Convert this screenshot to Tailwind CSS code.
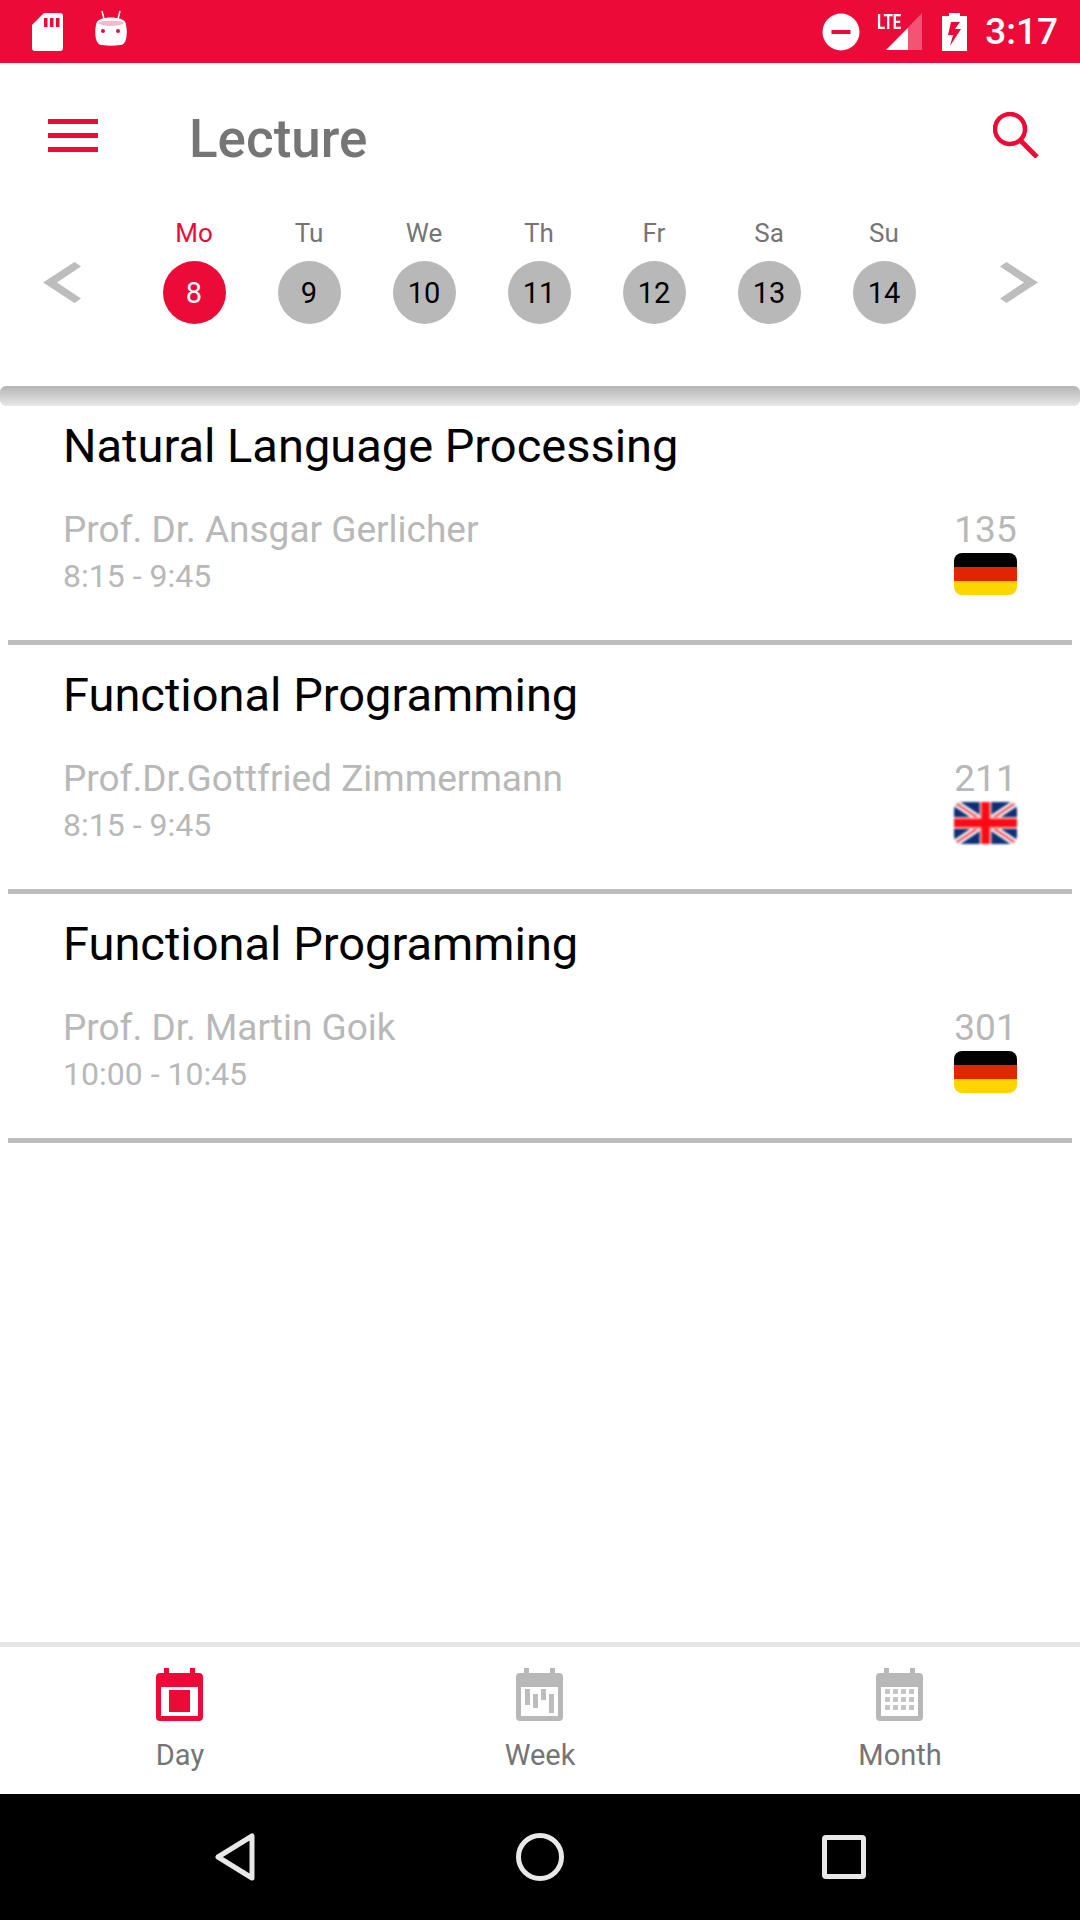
<!DOCTYPE html>
<html lang="en">
<head>
    <meta charset="UTF-8">
    <meta name="viewport" content="width=device-width, initial-scale=1.0">
    <title>Lecture</title>
    <script src="https://cdn.jsdelivr.net/npm/@tailwindcss/browser@4"></script>
</head>
<body class="bg-white font-['Roboto',sans-serif]">
<div class="w-[1080px] h-[1920px] flex flex-col overflow-hidden">

    <!-- status bar -->
    <div class="h-[63px] shrink-0 bg-[#ec0b38] flex items-center text-white">
        <svg class="ml-[32px]" width="31" height="38" viewBox="0 0 31 38"><path fill="#fff" d="M12 0H28a3 3 0 0 1 3 3V35a3 3 0 0 1-3 3H3a3 3 0 0 1-3-3V12Z"/><path fill="#ec0b38" d="M12 5h3.500v9H12zM18 5h3.500v9H18zM24 5h3.500v9H24z"/></svg>
        <svg class="ml-[32px] mt-[-6px]" width="32" height="37" viewBox="0 0 32 37"><path stroke="#fff" stroke-width="1.500" d="M7 1l2 8M25 1l-2 8"/><path fill="#fff" d="M6 9c6-2 14-2 20 0 3 1 5 3 5 6 1 4 1 10 0 14-1 4-3 6-6 6-6 1-12 1-18 0-3 0-5-2-6-6-1-4-1-10 0-14 0-3 2-5 5-6Z"/><path fill="#f9b8c6" d="M3 13c2-3 24-3 26 0-5 4-21 4-26 0Z"/><circle cx="8" cy="21" r="2" fill="#ec0b38"/><circle cx="23" cy="21" r="2" fill="#ec0b38"/></svg>
        <svg class="ml-auto" width="38" height="38" viewBox="0 0 38 38"><circle cx="19" cy="19" r="18.500" fill="#fff"/><rect x="9.500" y="17" width="19" height="4" fill="#ec0b38"/></svg>
        <div class="relative ml-[17px] w-[46px] h-[38px]">
            <span class="absolute left-0 top-[-1px] text-[21px] leading-[20px] font-bold scale-x-[0.72] origin-left">LTE</span>
            <svg class="absolute left-[9px] top-0" width="36" height="37" viewBox="0 0 36 37"><path fill="#fff" fill-opacity=".3" d="M36 0V37H0Z"/><path fill="#fff" d="M22 15V37H0Z"/></svg>
        </div>
        <svg class="ml-[19px]" width="25" height="38" viewBox="0 0 25 38"><path fill="#fff" d="M7 0h11v3h7v35H0V3h7Z"/><path fill="#ec0b38" d="M14 9H9L6 22h5L8 33l11-17h-6l5-7Z"/></svg>
        <span class="ml-[18px] mr-[22px] text-[37px] leading-[44px] font-medium">3:17</span>
    </div>

    <!-- toolbar -->
    <div class="h-[150px] shrink-0 flex items-center">
        <div class="ml-[48px] w-[50px] flex flex-col gap-[9px] mt-[-5px]">
            <div class="h-[5px] bg-[#ec0b38]"></div>
            <div class="h-[5px] bg-[#ec0b38]"></div>
            <div class="h-[5px] bg-[#ec0b38]"></div>
        </div>
        <h1 class="ml-[91px] mt-[2px] text-[53px] leading-[60px] font-medium text-[#757575]">Lecture</h1>
        <svg class="ml-auto mr-[41px] mt-[-6px]" width="46" height="46" viewBox="0 0 46 46"><circle cx="17" cy="17" r="15" fill="none" stroke="#ec0b38" stroke-width="4.500"/><path d="M27 28l17 17" stroke="#ec0b38" stroke-width="5"/></svg>
    </div>

    <!-- day picker -->
    <div class="h-[173px] shrink-0 flex items-start pt-[5px]">
        <svg class="ml-[43px] mt-[44px]" width="38" height="41" viewBox="0 0 38 41"><path fill="#bdbdbd" d="M0 20.500L31.500 0L38 4.500L14 20.500L38 36.500L31.500 41Z"/></svg>
        <div class="ml-[55.500px] flex">
            <div class="w-[115px] flex flex-col items-center">
                <span class="text-[26px] leading-[30px] text-[#ec0b38]">Mo</span>
                <span class="mt-[13px] pt-[2px] w-[63px] h-[63px] rounded-full bg-[#ec0b38] text-white text-[29px] flex items-center justify-center">8</span>
            </div>
            <div class="w-[115px] flex flex-col items-center">
                <span class="text-[26px] leading-[30px] text-[#757575]">Tu</span>
                <span class="mt-[13px] pt-[2px] w-[63px] h-[63px] rounded-full bg-[#b8b8b8] text-black text-[29px] flex items-center justify-center">9</span>
            </div>
            <div class="w-[115px] flex flex-col items-center">
                <span class="text-[26px] leading-[30px] text-[#757575]">We</span>
                <span class="mt-[13px] pt-[2px] w-[63px] h-[63px] rounded-full bg-[#b8b8b8] text-black text-[29px] flex items-center justify-center">10</span>
            </div>
            <div class="w-[115px] flex flex-col items-center">
                <span class="text-[26px] leading-[30px] text-[#757575]">Th</span>
                <span class="mt-[13px] pt-[2px] w-[63px] h-[63px] rounded-full bg-[#b8b8b8] text-black text-[29px] flex items-center justify-center">11</span>
            </div>
            <div class="w-[115px] flex flex-col items-center">
                <span class="text-[26px] leading-[30px] text-[#757575]">Fr</span>
                <span class="mt-[13px] pt-[2px] w-[63px] h-[63px] rounded-full bg-[#b8b8b8] text-black text-[29px] flex items-center justify-center">12</span>
            </div>
            <div class="w-[115px] flex flex-col items-center">
                <span class="text-[26px] leading-[30px] text-[#757575]">Sa</span>
                <span class="mt-[13px] pt-[2px] w-[63px] h-[63px] rounded-full bg-[#b8b8b8] text-black text-[29px] flex items-center justify-center">13</span>
            </div>
            <div class="w-[115px] flex flex-col items-center">
                <span class="text-[26px] leading-[30px] text-[#757575]">Su</span>
                <span class="mt-[13px] pt-[2px] w-[63px] h-[63px] rounded-full bg-[#b8b8b8] text-black text-[29px] flex items-center justify-center">14</span>
            </div>
        </div>
        <svg class="ml-[58.500px] mt-[44px]" width="38" height="41" viewBox="0 0 38 41"><path fill="#bdbdbd" d="M38 20.500L6.500 0L0 4.500L24 20.500L0 36.500L6.500 41Z"/></svg>
    </div>

    <!-- shadow under the picker -->
    <div class="h-[20px] shrink-0 rounded-[6px] bg-gradient-to-b from-[#b4b4b4] to-[#e8e8e8]"></div>

    <!-- lectures -->
    <div class="flex-1 mt-[-10px]">
        <div class="h-[249px] flex flex-col">
            <h2 class="pt-[23px] pl-[63px] text-[47px] leading-[54px] text-black">Natural Language Processing</h2>
            <div class="mt-[35px] pl-[63px] pr-[63px] flex justify-between">
                <div>
                    <p class="text-[37px] leading-[44px] text-[#b8b8b8]">Prof. Dr. Ansgar Gerlicher</p>
                    <p class="mt-[4px] text-[32px] leading-[40px] text-[#b8b8b8]">8:15 - 9:45</p>
                </div>
                <div class="w-[63px] flex flex-col items-center">
                    <span class="text-[37px] leading-[44px] text-[#b8b8b8]">135</span>
                    <svg class="mt-[1px] blur-[0.6px]" width="63" height="42" viewBox="0 0 63 42"><defs><clipPath id="de1"><rect width="63" height="42" rx="8"/></clipPath></defs><g clip-path="url(#de1)"><rect width="63" height="14" fill="#000"/><rect y="14" width="63" height="14" fill="#e32400"/><rect y="28" width="63" height="14" fill="#ffd500"/></g></svg>
                </div>
            </div>
            <div class="mt-auto mx-[8px] h-[5px] bg-[#bdbdbd]"></div>
        </div>
        <div class="h-[249px] flex flex-col">
            <h2 class="pt-[23px] pl-[63px] text-[47px] leading-[54px] text-black">Functional Programming</h2>
            <div class="mt-[35px] pl-[63px] pr-[63px] flex justify-between">
                <div>
                    <p class="text-[37px] leading-[44px] text-[#b8b8b8]">Prof.Dr.Gottfried Zimmermann</p>
                    <p class="mt-[4px] text-[32px] leading-[40px] text-[#b8b8b8]">8:15 - 9:45</p>
                </div>
                <div class="w-[63px] flex flex-col items-center">
                    <span class="text-[37px] leading-[44px] text-[#b8b8b8]">211</span>
                    <svg class="mt-[1px] blur-[1px]" width="63" height="42" viewBox="0 0 63 42"><defs><clipPath id="uk"><rect width="63" height="42" rx="8"/></clipPath></defs><g clip-path="url(#uk)"><rect width="63" height="42" fill="#0f2f74"/><path d="M0 0L63 42M63 0L0 42" stroke="#fff" stroke-width="7"/><path d="M0 0L63 42M63 0L0 42" stroke="#f0323c" stroke-width="2"/><path d="M31.500 0V42M0 21H63" stroke="#f3b0b0" stroke-width="12"/><path d="M31.500 0V42M0 21H63" stroke="#fb0a14" stroke-width="8"/></g></svg>
                </div>
            </div>
            <div class="mt-auto mx-[8px] h-[5px] bg-[#bdbdbd]"></div>
        </div>
        <div class="h-[249px] flex flex-col">
            <h2 class="pt-[23px] pl-[63px] text-[47px] leading-[54px] text-black">Functional Programming</h2>
            <div class="mt-[35px] pl-[63px] pr-[63px] flex justify-between">
                <div>
                    <p class="text-[37px] leading-[44px] text-[#b8b8b8]">Prof. Dr. Martin Goik</p>
                    <p class="mt-[4px] text-[32px] leading-[40px] text-[#b8b8b8]">10:00 - 10:45</p>
                </div>
                <div class="w-[63px] flex flex-col items-center">
                    <span class="text-[37px] leading-[44px] text-[#b8b8b8]">301</span>
                    <svg class="mt-[1px] blur-[0.6px]" width="63" height="42" viewBox="0 0 63 42"><defs><clipPath id="de2"><rect width="63" height="42" rx="8"/></clipPath></defs><g clip-path="url(#de2)"><rect width="63" height="14" fill="#000"/><rect y="14" width="63" height="14" fill="#e32400"/><rect y="28" width="63" height="14" fill="#ffd500"/></g></svg>
                </div>
            </div>
            <div class="mt-auto mx-[8px] h-[5px] bg-[#bdbdbd]"></div>
        </div>
    </div>

    <!-- bottom tabs -->
    <div class="h-[152px] shrink-0 border-t-[5px] border-[#e6e6e6] flex pt-[21px]">
        <div class="w-[360px] flex flex-col items-center">
            <svg class="ml-[-1px]" width="47" height="53" viewBox="0 0 47 53"><path fill="#ec0b38" d="M8 0h5v5h21V0h5v5h4a4 4 0 0 1 4 4v40a4 4 0 0 1-4 4H4a4 4 0 0 1-4-4V9a4 4 0 0 1 4-4h4Z"/><rect x="5" y="19" width="37" height="29" fill="#fff"/><rect x="13" y="22" width="21" height="22" fill="#ec0b38"/></svg>
            <span class="mt-[16px] text-[29px] leading-[36px] text-[#757575]">Day</span>
        </div>
        <div class="w-[360px] flex flex-col items-center">
            <svg class="ml-[-1px]" width="47" height="53" viewBox="0 0 47 53"><path fill="#b8b8b8" d="M8 0h5v5h21V0h5v5h4a4 4 0 0 1 4 4v40a4 4 0 0 1-4 4H4a4 4 0 0 1-4-4V9a4 4 0 0 1 4-4h4Z"/><rect x="5" y="19" width="37" height="29" fill="#fff"/><path fill="#bdbdbd" d="M9 21h5v16H9zM17 26h5v14h-5zM25 21h5v11h-5zM33 26h5v19h-5z"/></svg>
            <span class="mt-[16px] text-[29px] leading-[36px] text-[#757575]">Week</span>
        </div>
        <div class="w-[360px] flex flex-col items-center">
            <svg class="ml-[-1px]" width="47" height="53" viewBox="0 0 47 53"><path fill="#b8b8b8" d="M8 0h5v5h21V0h5v5h4a4 4 0 0 1 4 4v40a4 4 0 0 1-4 4H4a4 4 0 0 1-4-4V9a4 4 0 0 1 4-4h4Z"/><rect x="5" y="19" width="37" height="29" fill="#fff"/><path fill="#c4c4c4" d="M9 21h5v5H9zM17 21h5v5h-5zM25 21h5v5h-5zM33 21h5v5h-5zM9 29h5v5H9zM17 29h5v5h-5zM25 29h5v5h-5zM33 29h5v5h-5zM9 37h5v5H9zM17 37h5v5h-5zM25 37h5v5h-5zM33 37h5v5h-5z"/></svg>
            <span class="mt-[16px] text-[29px] leading-[36px] text-[#757575]">Month</span>
        </div>
    </div>

    <!-- android nav bar -->
    <div class="h-[126px] shrink-0 bg-black flex items-center">
        <svg class="ml-[215px]" width="40" height="48" viewBox="0 0 40 48"><path d="M37 3V45L3 24Z" fill="none" stroke="#e8e8e8" stroke-width="5" stroke-linejoin="round"/></svg>
        <svg class="ml-[261px]" width="48" height="48" viewBox="0 0 48 48"><circle cx="24" cy="24" r="21.500" fill="none" stroke="#e8e8e8" stroke-width="5"/></svg>
        <svg class="ml-[258px]" width="44" height="44" viewBox="0 0 44 44"><rect x="2.500" y="2.500" width="39" height="39" rx="1.500" fill="none" stroke="#e8e8e8" stroke-width="5"/></svg>
    </div>
</div>
</body>
</html>
